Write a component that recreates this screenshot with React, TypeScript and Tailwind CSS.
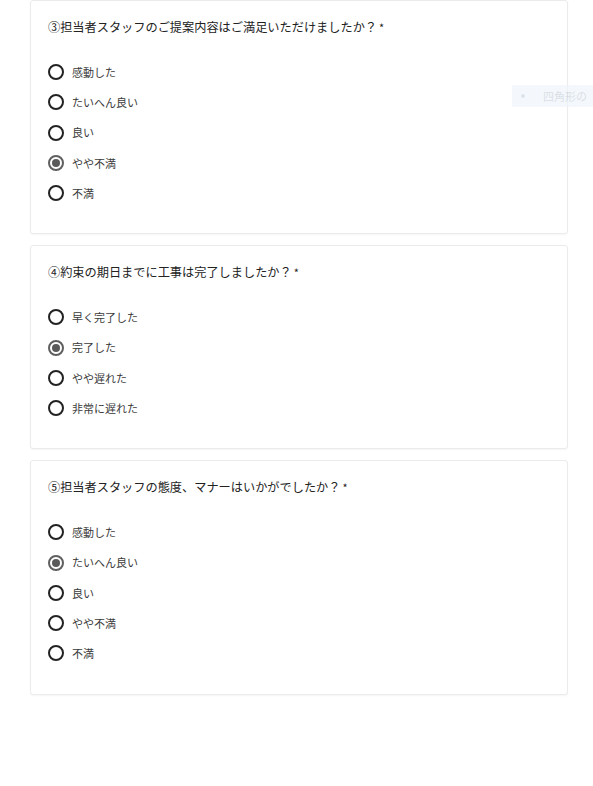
const questions = [
  {
    title: "③担当者スタッフのご提案内容はご満足いただけましたか？",
    options: ["感動した", "たいへん良い", "良い", "やや不満", "不満"],
    selected: 3,
  },
  {
    title: "④約束の期日までに工事は完了しましたか？",
    options: ["早く完了した", "完了した", "やや遅れた", "非常に遅れた"],
    selected: 1,
  },
  {
    title: "⑤担当者スタッフの態度、マナーはいかがでしたか？",
    options: ["感動した", "たいへん良い", "良い", "やや不満", "不満"],
    selected: 1,
  },
];

const Radio = ({ checked }: { checked: boolean }) =>
  checked ? (
    <span className="flex h-4 w-4 items-center justify-center rounded-full border-2 border-[#5f5f5f]">
      <span className="h-2 w-2 rounded-full bg-[#5a5a5a]" />
    </span>
  ) : (
    <span className="h-4 w-4 rounded-full border-2 border-[#222]" />
  );

export default function App() {
  return (
    <div
      className="relative min-h-[786px] bg-white"
      style={{ fontFamily: '"Noto Sans CJK JP", "Noto Sans", sans-serif' }}
    >
      <div className="flex flex-col gap-[11px] pl-[30px] pr-[25px]">
        {questions.map((q, i) => (
          <div
            key={i}
            className="rounded-[3px] border border-[#ebebeb] bg-white pb-[25px] pl-[17px] pt-[16px] shadow-[0_1px_2px_rgba(0,0,0,0.04)]"
          >
            <div className="h-5 text-[12.2px] leading-5 text-[#222]">
              {q.title}
              <span className="ml-[2px] text-[11px]">*</span>
            </div>
            <div className="mt-5 flex flex-col">
              {q.options.map((o, j) => (
                <div key={j} className="flex h-[30.25px] items-center gap-[8px]">
                  <Radio checked={j === q.selected} />
                  <span className="text-[11px] text-[#3a3a3a]">{o}</span>
                </div>
              ))}
            </div>
          </div>
        ))}
      </div>

      <div className="absolute left-[512px] top-[85px] flex h-[22px] w-[81px] items-center gap-[18px] overflow-hidden bg-[#eef5fd] pl-[9px] opacity-60">
        <span className="h-[4px] w-[4px] shrink-0 rounded-full bg-[#c8d3de]" />
        <span className="whitespace-nowrap text-[11px] text-[#c3cbd4]">四角形の</span>
      </div>
    </div>
  );
}
